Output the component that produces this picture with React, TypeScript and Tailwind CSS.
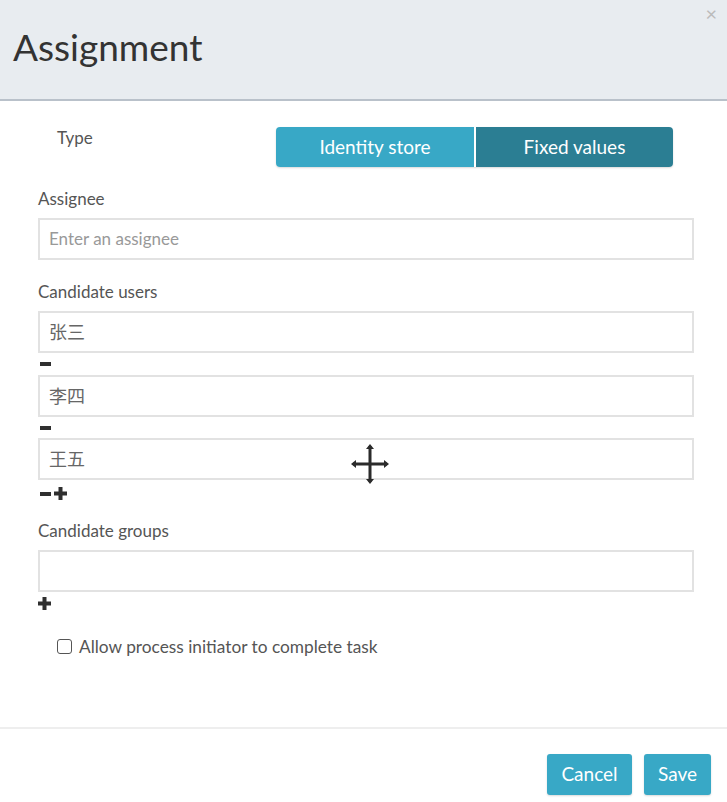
import { useState } from "react"

const font = { fontFamily: "Lato, 'Noto Sans CJK SC', sans-serif" }

const Minus = () => (
  <svg width="12" height="6" viewBox="0 0 12 6" className="block">
    <rect x="0" y="1" width="11" height="4" fill="#2f2f2f" />
  </svg>
)

const Plus = () => (
  <svg width="13" height="13" viewBox="0 0 13 13" className="block">
    <rect x="0" y="4.5" width="13" height="4" fill="#2f2f2f" />
    <rect x="4.5" y="0" width="4" height="13" fill="#2f2f2f" />
  </svg>
)

const MoveCursor = () => (
  <svg width="40" height="42" viewBox="0 0 40 42" className="absolute left-[310px] top-[3px]">
    <path d="M20 3 V39 M3 21 H37" stroke="#2b2b2b" strokeWidth="3" fill="none" />
    <path d="M20 1 L16 6 H24 Z M20 41 L16 36 H24 Z M1 21 L6 17 V25 Z M39 21 L34 17 V25 Z" fill="#2b2b2b" />
  </svg>
)

const Field = ({ value, placeholder, children }: { value?: string; placeholder?: string; children?: React.ReactNode }) => (
  <div className="relative h-[42px] border-2 border-[#e2e2e2] bg-white flex items-center px-[9px] text-[17px]">
    {value ? <span className="text-[#666] text-[18px]">{value}</span> : <span className="text-[#999]">{placeholder}</span>}
    {children}
  </div>
)

export default function App() {
  const [checked, setChecked] = useState(false)
  return (
    <div className="w-[727px] h-[802px] bg-white relative overflow-hidden" style={font}>
      <div className="h-[101px] bg-[#e8ecf0] border-b-2 border-[#b9c1ca] relative">
        <h1 className="absolute left-[13px] top-[23px] text-[37px] leading-[48px] text-[#333]">Assignment</h1>
        <span className="absolute right-[10px] top-[1px] text-[20px] text-[#bbb] leading-[24px]">×</span>
      </div>

      <div className="px-[38px] pt-[26px]">
        <div className="flex items-start">
          <span className="ml-[19px] -mt-[2px] text-[17px] text-[#555] w-[219px]">Type</span>
          <div className="flex rounded-[4px] overflow-hidden shadow-[0_1px_2px_rgba(0,0,0,0.15)]">
            <div className="w-[198px] h-[40px] bg-[#38a8c6] text-white text-[19px] flex items-center justify-center">Identity store</div>
            <div className="w-[2px] bg-white" />
            <div className="w-[197px] h-[40px] bg-[#2b7e93] text-white text-[19px] flex items-center justify-center">Fixed values</div>
          </div>
        </div>

        <div className="mt-[22px] text-[17px] text-[#555] leading-[20px]">Assignee</div>
        <div className="mt-[9px] w-[656px]">
          <Field placeholder="Enter an assignee" />
        </div>

        <div className="mt-[22px] text-[17px] text-[#555] leading-[20px]">Candidate users</div>
        <div className="mt-[9px] w-[656px]">
          <Field value="张三" />
          <div className="h-[22px] pt-[8px] pl-[2px]"><Minus /></div>
          <Field value="李四" />
          <div className="h-[21px] pt-[8px] pl-[2px]"><Minus /></div>
          <Field value="王五">
            <MoveCursor />
          </Field>
          <div className="h-[22px] pt-[5px] pl-[2px] flex items-center gap-[2px]"><Minus /><Plus /></div>
        </div>

        <div className="mt-[19px] text-[17px] text-[#555] leading-[20px]">Candidate groups</div>
        <div className="mt-[9px] w-[656px]">
          <Field />
          <div className="pt-[5px]"><Plus /></div>
        </div>

        <label className="mt-[24px] ml-[19px] flex items-center gap-[7px] text-[17.3px] text-[#555]">
          <input
            type="checkbox"
            checked={checked}
            onChange={() => setChecked(!checked)}
            className="w-[15px] h-[15px] appearance-none border border-[#555] rounded-[3px] bg-white"
          />
          Allow process initiator to complete task
        </label>
      </div>

      <div className="absolute left-0 right-0 top-[727px] border-t-2 border-[#eee] flex justify-end gap-[12px] pr-[16px] pt-[25px]">
        <button className="w-[85px] h-[41px] rounded-[3px] bg-[#38a8c6] text-white text-[19px] shadow-[0_1px_2px_rgba(0,0,0,0.15)]">Cancel</button>
        <button className="w-[67px] h-[41px] rounded-[3px] bg-[#38a8c6] text-white text-[19px] shadow-[0_1px_2px_rgba(0,0,0,0.15)]">Save</button>
      </div>
    </div>
  )
}
